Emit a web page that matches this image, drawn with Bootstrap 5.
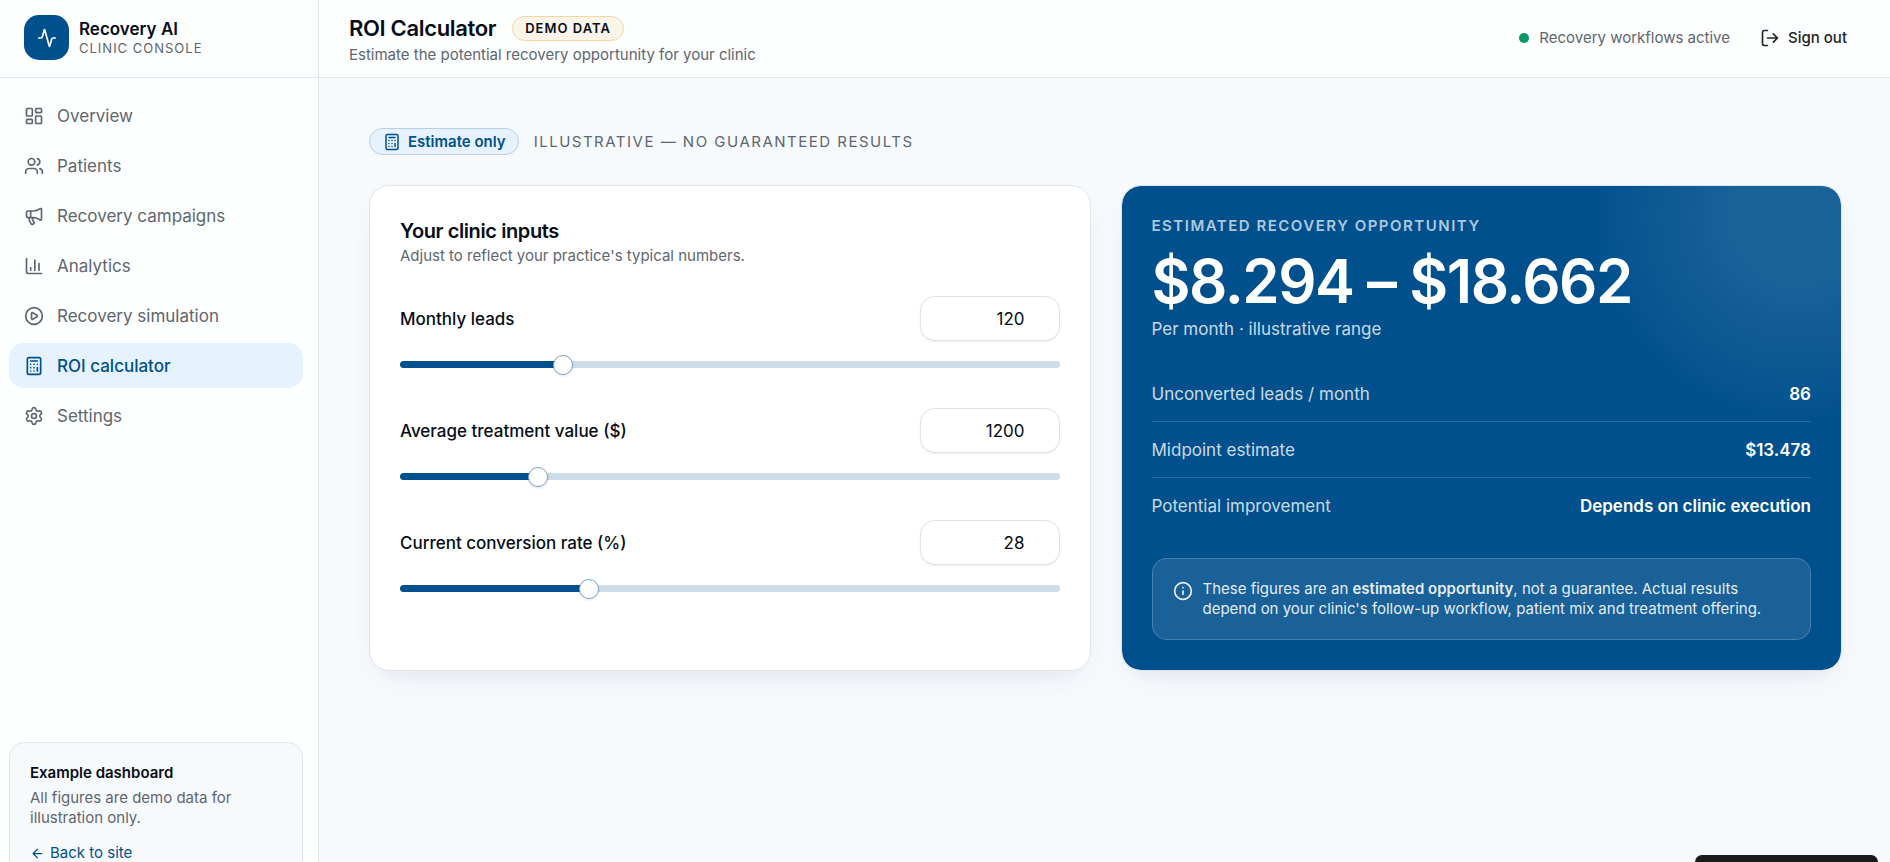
<!DOCTYPE html>
<html lang="en">
<head>
<meta charset="utf-8">
<meta name="viewport" content="width=device-width, initial-scale=1">
<title>ROI Calculator · Recovery AI</title>
<link href="https://cdn.jsdelivr.net/npm/bootstrap@5.3.0/dist/css/bootstrap.min.css" rel="stylesheet">
<style>
  :root { --brand: #00508e; --ink: #060d18; --muted-ink: #5f6670; --line: #dfe5e9; --canvas: #f7fafd; --brand-soft: #e6f3fe; }
  body { font-family: Inter, "Liberation Sans", sans-serif; font-size: 17px; line-height: 24px; color: var(--ink); background: var(--canvas); }
  svg.ico { width: 20px; height: 20px; fill: none; stroke: currentColor; stroke-width: 2; stroke-linecap: round; stroke-linejoin: round; flex: none; }
  .app-shell { height: 100vh; overflow: hidden; }
  .side-pane { width: 319px; height: calc(100vh + 37px); background: #fdfefe; border-right: 1px solid var(--line); }
  .bar-row { height: 78px; border-bottom: 1px solid var(--line); background: #fdfefe; }
  .brand-row { gap: 10px; padding-bottom: 2px; }
  .brand-tile { width: 45px; height: 45px; border-radius: 15px; background: var(--brand); color: #fff; }
  .brand-name { font-weight: 600; line-height: 20px; }
  .brand-sub { font-size: 13px; line-height: 18px; letter-spacing: 1px; color: var(--muted-ink); }
  .side-nav { padding: 15px 15px 0 9px; gap: 5px; }
  .side-nav .nav-link { height: 45px; padding: 0 15px; gap: 13px; border-radius: 15px; color: var(--muted-ink); }
  .side-nav .nav-link.active { background: var(--brand-soft); color: var(--brand); font-weight: 500; }
  .side-note { margin: auto 15px 15px 9px; padding: 20px; border: 1px solid var(--line); border-radius: 15px; background: var(--canvas); }
  .side-note p { margin: 5px 0 15px; }
  .back-link { gap: 5px; color: var(--brand); }
  .back-link svg.ico { width: 15px; height: 15px; }
  .fine { font-size: 15px; line-height: 20px; }
  .soft { color: var(--muted-ink); }
  .head-pad { padding: 0 31px 0 30px; }
  .head-text { padding-top: 2px; }
  .head-sub { margin-top: 3px; }
  .status-row { gap: 10px; padding-bottom: 2px; }
  .page-title { font-size: 22px; line-height: 28px; font-weight: 600; letter-spacing: -0.015em; }
  .demo-pill { font-size: 13px; line-height: 23px; font-weight: 600; letter-spacing: 1px; padding: 0 12px; border: 1px solid #f3d7a2; background: #fbf5e9; }
  .live-dot { width: 10px; height: 10px; background: #059669; }
  .est-row { gap: 15px; }
  .est-pill { height: 27px; padding: 0 12px 0 13px; gap: 7px; font-weight: 600; color: var(--brand); background: var(--brand-soft); border: 1px solid #b9cfe2; }
  .est-pill svg.ico { width: 18px; height: 18px; }
  .tracked { letter-spacing: 0.1em; }
  .page-body { padding: 50px 48px 0 50px; }
  .duo { display: grid; grid-template-columns: 1fr 1fr; gap: 30px; margin-top: 30px; }
  .panel { border-radius: 20px; padding: 30px; border: 1px solid var(--line); box-shadow: 0 12px 30px -12px rgba(15, 40, 70, .13); }
  .panel-in { background: #fff; }
  .panel-out { color: #fff; background: radial-gradient(circle 215px at calc(100% - 42px) 30px, rgba(255,255,255,.1) 30%, rgba(255,255,255,.05) 65%, rgba(255,255,255,0)) var(--brand); background-clip: padding-box; }
  .panel-title { font-size: 20px; line-height: 30px; font-weight: 600; letter-spacing: -0.02em; }
  .panel-sub { margin-bottom: 30px; }
  .field-group + .field-group { margin-top: 34px; }
  .field-group label { font-weight: 500; }
  .num-box { width: 140px; height: 45px; padding: 0 34px 0 15px; text-align: right; font-size: 17px; color: var(--ink); border: 1px solid #e0e3e6; border-radius: 15px; box-shadow: 0 1px 2px rgba(0,0,0,.08); appearance: textfield; -moz-appearance: textfield; }
  .num-box::-webkit-inner-spin-button { display: none; }
  .slide { appearance: none; -webkit-appearance: none; display: block; width: 100%; height: 20px; margin: 13px 0 0; background: transparent; }
  .slide::-webkit-slider-runnable-track { height: 7px; border-radius: 4px; background: linear-gradient(90deg, var(--brand) var(--fill), #ccdce8 var(--fill)); }
  .slide::-webkit-slider-thumb { -webkit-appearance: none; width: 20px; height: 20px; margin-top: -6px; border-radius: 50%; background: #fff; border: 1px solid #7fa4c8; box-shadow: 0 1px 3px rgba(0,0,0,.12); }
  .eyebrow { font-weight: 600; color: rgba(255,255,255,.7); }
  .big-range { font-size: 60px; line-height: 60px; font-weight: 600; letter-spacing: -0.025em; margin-top: 15px; }
  .per { color: rgba(255,255,255,.8); margin-top: 6px; }
  .facts { margin: 25px 0; }
  .facts > div { padding: 17px 0 15px; line-height: 23px; }
  .facts > div + div { border-top: 1px solid rgba(255,255,255,.15); }
  .facts dt { font-weight: 400; color: rgba(255,255,255,.8); }
  .facts dd { font-weight: 600; margin: 0; }
  .caveat { padding: 20px; gap: 10px; border: 1px solid rgba(255,255,255,.2); border-radius: 15px; background: rgba(255,255,255,.1); color: rgba(255,255,255,.9); }
  .caveat svg.ico { margin-top: 2px; }
  .corner-toast { right: 12px; bottom: 0; width: 183px; height: 7px; background: #191b1b; border-radius: 8px 8px 0 0; }
</style>
</head>
<body>
<svg class="d-none" xmlns="http://www.w3.org/2000/svg">
  <symbol id="i-calc" viewBox="0 0 24 24"><rect width="16" height="20" x="4" y="2" rx="2"/><path d="M8 6h8M16 14v4M16 10h.01M12 10h.01M8 10h.01M12 14h.01M8 14h.01M12 18h.01M8 18h.01"/></symbol>
</svg>
<div class="app-shell d-flex">
  <aside class="side-pane d-flex flex-column flex-shrink-0">
    <div class="bar-row brand-row d-flex align-items-center flex-shrink-0 ps-4">
      <span class="brand-tile d-flex align-items-center justify-content-center"><svg class="ico" viewBox="0 0 24 24"><path d="M22 12h-2.48a2 2 0 0 0-1.93 1.46l-2.35 8.36a.25.25 0 0 1-.48 0L9.24 2.18a.25.25 0 0 0-.48 0l-2.35 8.36A2 2 0 0 1 4.49 12H2"/></svg></span>
      <div><div class="brand-name">Recovery AI</div><div class="brand-sub">CLINIC CONSOLE</div></div>
    </div>
    <nav class="side-nav nav flex-column flex-nowrap" aria-label="Main">
      <a class="nav-link d-flex align-items-center" href="#"><svg class="ico" viewBox="0 0 24 24"><rect width="7" height="9" x="3" y="3" rx="1"/><rect width="7" height="5" x="14" y="3" rx="1"/><rect width="7" height="9" x="14" y="12" rx="1"/><rect width="7" height="5" x="3" y="16" rx="1"/></svg>Overview</a>
      <a class="nav-link d-flex align-items-center" href="#"><svg class="ico" viewBox="0 0 24 24"><path d="M16 21v-2a4 4 0 0 0-4-4H6a4 4 0 0 0-4 4v2M16 3.128a4 4 0 0 1 0 7.744M22 21v-2a4 4 0 0 0-3-3.87"/><circle cx="9" cy="7" r="4"/></svg>Patients</a>
      <a class="nav-link d-flex align-items-center" href="#"><svg class="ico" viewBox="0 0 24 24"><path d="M11 6a13 13 0 0 0 8.4-2.8A1 1 0 0 1 21 4v12a1 1 0 0 1-1.6.8A13 13 0 0 0 11 14H5a2 2 0 0 1-2-2V8a2 2 0 0 1 2-2zM6 14a12 12 0 0 0 2.4 7.2 2 2 0 0 0 3.2-2.4A8 8 0 0 1 10 14M8 6v8"/></svg>Recovery campaigns</a>
      <a class="nav-link d-flex align-items-center" href="#"><svg class="ico" viewBox="0 0 24 24"><path d="M3 3v16a2 2 0 0 0 2 2h16M18 17V9M13 17V5M8 17v-3"/></svg>Analytics</a>
      <a class="nav-link d-flex align-items-center" href="#"><svg class="ico" viewBox="0 0 24 24"><circle cx="12" cy="12" r="10"/><path d="M9 9.003a1 1 0 0 1 1.517-.859l4.997 2.997a1 1 0 0 1 0 1.718l-4.997 2.997A1 1 0 0 1 9 14.996z"/></svg>Recovery simulation</a>
      <a class="nav-link active d-flex align-items-center" href="#" aria-current="page"><svg class="ico"><use href="#i-calc"/></svg>ROI calculator</a>
      <a class="nav-link d-flex align-items-center" href="#"><svg class="ico" viewBox="0 0 24 24"><path d="M9.671 4.136a2.34 2.34 0 0 1 4.659 0 2.34 2.34 0 0 0 3.319 1.915 2.34 2.34 0 0 1 2.33 4.033 2.34 2.34 0 0 0 0 3.831 2.34 2.34 0 0 1-2.33 4.033 2.34 2.34 0 0 0-3.319 1.915 2.34 2.34 0 0 1-4.659 0 2.34 2.34 0 0 0-3.32-1.915 2.34 2.34 0 0 1-2.33-4.033 2.34 2.34 0 0 0 0-3.831A2.34 2.34 0 0 1 6.35 6.051a2.34 2.34 0 0 0 3.319-1.915"/><circle cx="12" cy="12" r="3"/></svg>Settings</a>
    </nav>
    <div class="side-note fine">
      <div class="fw-semibold">Example dashboard</div>
      <p class="soft">All figures are demo data for illustration only.</p>
      <a class="back-link d-flex align-items-center text-decoration-none" href="#"><svg class="ico" viewBox="0 0 24 24"><path d="m12 19-7-7 7-7M19 12H5"/></svg>Back to site</a>
    </div>
  </aside>

  <div class="flex-grow-1">
    <header class="bar-row head-pad d-flex align-items-center justify-content-between">
      <div class="head-text">
        <div class="d-flex align-items-center gap-3">
          <h1 class="page-title m-0">ROI Calculator</h1>
          <span class="demo-pill rounded-pill">DEMO DATA</span>
        </div>
        <div class="head-sub fine soft">Estimate the potential recovery opportunity for your clinic</div>
      </div>
      <div class="status-row d-flex align-items-center fine">
        <span class="live-dot rounded-circle"></span>
        <span class="soft">Recovery workflows active</span>
        <button type="button" class="btn fine fw-medium d-inline-flex align-items-center gap-2 border-0 ms-2"><svg class="ico" viewBox="0 0 24 24"><path d="m16 17 5-5-5-5M21 12H9M9 21H5a2 2 0 0 1-2-2V5a2 2 0 0 1 2-2h4"/></svg>Sign out</button>
      </div>
    </header>

    <main class="page-body">
      <div class="est-row d-flex align-items-center fine">
        <span class="est-pill rounded-pill d-inline-flex align-items-center"><svg class="ico"><use href="#i-calc"/></svg>Estimate only</span>
        <span class="soft tracked">ILLUSTRATIVE — NO GUARANTEED RESULTS</span>
      </div>
      <div class="duo">
        <section class="panel panel-in">
          <h2 class="panel-title m-0">Your clinic inputs</h2>
          <p class="panel-sub fine soft">Adjust to reflect your practice's typical numbers.</p>
          <div class="field-group">
            <div class="d-flex align-items-center justify-content-between"><label for="leads">Monthly leads</label><input class="num-box" id="leads" type="number" value="120"></div>
            <input class="slide" type="range" min="0" max="500" value="120" aria-label="Monthly leads" data-for="leads">
          </div>
          <div class="field-group">
            <div class="d-flex align-items-center justify-content-between"><label for="treatment">Average treatment value ($)</label><input class="num-box" id="treatment" type="number" value="1200"></div>
            <input class="slide" type="range" min="0" max="6000" value="1200" aria-label="Average treatment value" data-for="treatment">
          </div>
          <div class="field-group">
            <div class="d-flex align-items-center justify-content-between"><label for="rate">Current conversion rate (%)</label><input class="num-box" id="rate" type="number" value="28"></div>
            <input class="slide" type="range" min="0" max="100" value="28" aria-label="Current conversion rate" data-for="rate">
          </div>
        </section>
        <section class="panel panel-out">
          <div class="eyebrow tracked fine">ESTIMATED RECOVERY OPPORTUNITY</div>
          <div class="big-range">$8.294 – $18.662</div>
          <div class="per">Per month · illustrative range</div>
          <dl class="facts">
            <div class="d-flex justify-content-between"><dt>Unconverted leads / month</dt><dd>86</dd></div>
            <div class="d-flex justify-content-between"><dt>Midpoint estimate</dt><dd>$13.478</dd></div>
            <div class="d-flex justify-content-between"><dt>Potential improvement</dt><dd>Depends on clinic execution</dd></div>
          </dl>
          <div class="caveat fine d-flex"><svg class="ico" viewBox="0 0 24 24"><circle cx="12" cy="12" r="10"/><path d="M12 16v-4M12 8h.01"/></svg><div>These figures are an <strong class="fw-semibold">estimated opportunity</strong>, not a guarantee. Actual results depend on your clinic's follow-up workflow, patient mix and treatment offering.</div></div>
        </section>
      </div>
    </main>
  </div>
</div>
<div class="corner-toast position-fixed"></div>
<script src="https://cdn.jsdelivr.net/npm/bootstrap@5.3.0/dist/js/bootstrap.bundle.min.js"></script>
<script>
  // Keep the filled part of each track, and the number box, in step with the slider.
  document.querySelectorAll('.slide').forEach(function (s) {
    var box = document.getElementById(s.dataset.for);
    function paint() { s.style.setProperty('--fill', (100 * s.value / s.max) + '%'); }
    s.addEventListener('input', function () { box.value = s.value; paint(); });
    box.addEventListener('input', function () { s.value = box.value; paint(); });
    paint();
  });
</script>
</body>
</html>
